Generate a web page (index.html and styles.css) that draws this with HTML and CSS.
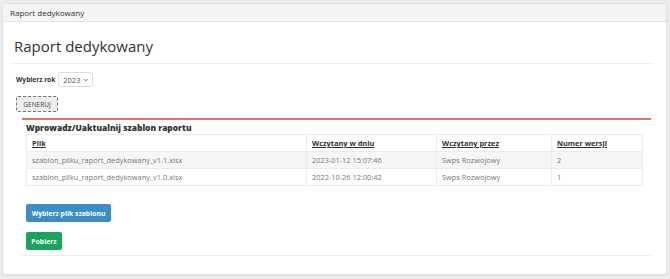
FILE: index.html
```html
<!DOCTYPE html>
<html lang="pl">
<head>
    <meta charset="UTF-8">
    <meta name="viewport" content="width=device-width, initial-scale=1.0">
    <title>Raport dedykowany</title>
    <link rel="stylesheet" href="styles.css">
</head>
<body>

<div class="panel">
    <div class="panel-heading">Raport dedykowany</div>
    <div class="panel-body">
        <h1 class="page-title">Raport dedykowany</h1>

        <div class="year-row">
            <label for="rok">Wybierz rok</label>
            <div class="select-wrap">
                <select id="rok" class="year-select">
                    <option>2023</option>
                    <option>2022</option>
                </select>
                <svg class="chevron" width="6" height="4" viewBox="0 0 6 4">
                    <path d="M0.8 0.8 L3 3 L5.2 0.8" fill="none" stroke="#666" stroke-width="0.9"/>
                </svg>
            </div>
        </div>
        <button class="btn-generate">GENERUJ</button>

        <div class="template-box">
            <h3>Wprowadz/Uaktualnij szablon raportu</h3>
            <table class="template-table">
                <thead>
                    <tr>
                        <th class="col-file"><a href="#">Plik</a></th>
                        <th class="col-date"><a href="#">Wczytany w dniu</a></th>
                        <th class="col-user"><a href="#">Wczytany przez</a></th>
                        <th><a href="#">Numer wersji</a></th>
                    </tr>
                </thead>
                <tbody>
                    <tr>
                        <td>szablon_pliku_raport_dedykowany_v1.1.xlsx</td>
                        <td>2023-01-12 15:07:46</td>
                        <td>Swps Rozwojowy</td>
                        <td>2</td>
                    </tr>
                    <tr>
                        <td>szablon_pliku_raport_dedykowany_v1.0.xlsx</td>
                        <td>2022-10-26 12:00:42</td>
                        <td>Swps Rozwojowy</td>
                        <td>1</td>
                    </tr>
                </tbody>
            </table>

            <div class="actions">
                <button class="btn btn-blue">Wybierz plik szablonu</button>
                <button class="btn btn-green">Pobierz</button>
            </div>
        </div>
    </div>
</div>

</body>
</html>
```

FILE: styles.css
```css
body {
    font-family: "Open Sans", Arial, sans-serif;
    margin: 0;
    padding: 3px 3px 4px 2px;
    background-color: #ececec;
    color: #333333;
}
.panel {
    background-color: #ffffff;
    border: 1px solid #e2e2e2;
    border-radius: 3px;
    box-shadow: 0 1px 2px rgba(0, 0, 0, 0.06);
    height: 272px;
    box-sizing: border-box;
}
.panel-heading {
    background-color: #f4f4f4;
    border-bottom: 1px solid #e6e6e6;
    font-size: 8px;
    height: 17px;
    line-height: 17px;
    padding-left: 7px;
    color: #333333;
}
.panel-body {
    padding: 0 13px 0 7px;
}
.page-title {
    font-weight: 400;
    font-size: 15px;
    line-height: 20px;
    margin: 0;
    padding: 14px 0 7px 4px;
    border-bottom: 1px solid #eeeeee;
    color: #333333;
}
.year-row {
    display: flex;
    align-items: center;
    gap: 3px;
    margin: 8px 0 0 6px;
}
.year-row label {
    font-size: 6.6px;
    font-weight: 700;
}
.select-wrap {
    display: flex;
    align-items: center;
    width: 35px;
    height: 15px;
    box-sizing: border-box;
    border: 1px solid #dddddd;
    border-radius: 3px;
    background-color: #ffffff;
    padding-right: 4px;
}
.year-select {
    appearance: none;
    -webkit-appearance: none;
    font-family: inherit;
    font-size: 7.5px;
    color: #555555;
    border: none;
    background: transparent;
    padding: 0 0 0 4px;
    width: 25px;
    outline: none;
}
.chevron {
    display: block;
}
.btn-generate {
    font-family: inherit;
    font-size: 6.5px;
    color: #444444;
    background-color: #eeeeee;
    border: 1px dashed #777777;
    border-radius: 2px;
    height: 16px;
    width: 42px;
    padding: 0;
    margin: 9px 0 0 6px;
    display: block;
}
.template-box {
    margin: 6px 2px 0 12px;
    border-top: 2px solid #e07569;
    border-bottom: 1px solid #eeeeee;
    padding: 2px 7px 5px 4px;
}
.template-box h3 {
    font-size: 8.4px;
    font-weight: 800;
    line-height: 12px;
    margin: 0;
    color: #333333;
}
.template-table {
    border-collapse: collapse;
    table-layout: fixed;
    width: 617px;
    font-size: 7.4px;
    color: #777777;
}
.template-table th,
.template-table td {
    border: 1px solid #ececec;
    text-align: left;
    padding: 0 5px;
    height: 16px;
    white-space: nowrap;
}
.template-table th a {
    color: #333333;
    font-weight: 700;
    text-decoration: underline;
}
.template-table tbody tr:first-child {
    background-color: #f6f6f6;
}
.col-file {
    width: 269px;
}
.col-date {
    width: 119px;
}
.col-user {
    width: 104px;
}
.actions {
    display: flex;
    flex-direction: column;
    align-items: flex-start;
    gap: 10px;
    margin-top: 18px;
}
.btn {
    font-family: inherit;
    font-size: 6.8px;
    font-weight: 700;
    color: #ffffff;
    border: none;
    border-radius: 2px;
    height: 18px;
    padding: 0;
    white-space: nowrap;
}
.btn-blue {
    background-color: #3b8ec5;
    width: 85px;
}
.btn-green {
    background-color: #18a45a;
    width: 36px;
}
```
